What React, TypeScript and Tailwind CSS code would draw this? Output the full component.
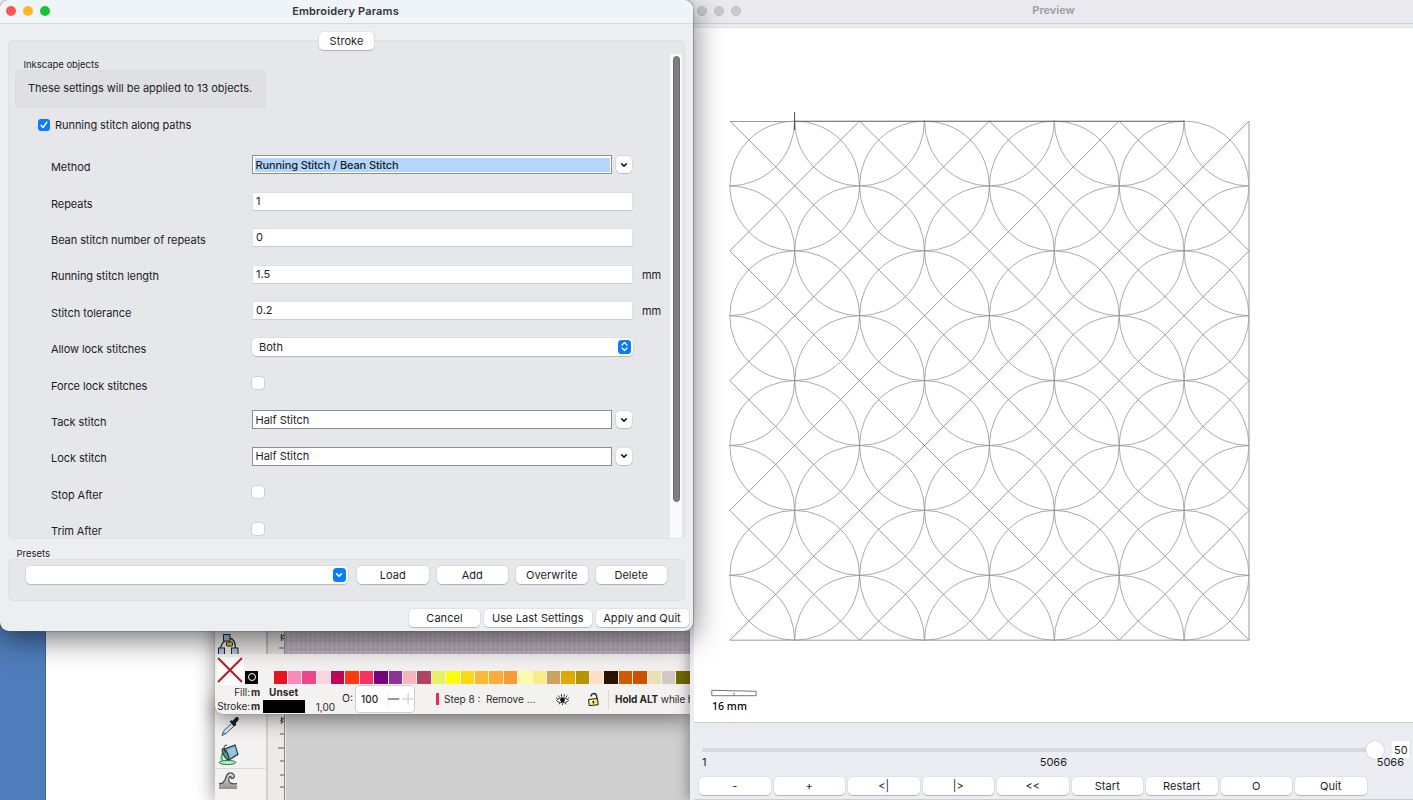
import React from "react";

const P = 129.8;
const X0 = 729.8;
const Y0 = 121;
const SIZE = P * 4;

const swatches = [
  "#e8141f", "#f48bb9", "#f1458b", "#fad5dd", "#c20556", "#fd3a10", "#f93465", "#760578", "#8c3494", "#f8b4bd",
  "#b04561", "#e6f163", "#ffff00", "#fcd815", "#fdb834", "#fdac39", "#fd9a31", "#fcfcab", "#fcec89", "#cba260",
  "#e4a700", "#b79400", "#fce0c5", "#291400", "#d25a00", "#d05000", "#e9e0b5", "#d3c8c8", "#706a00",
];

function Btn({ children, className = "" }: { children: React.ReactNode; className?: string }) {
  return (
    <div className={`flex h-[18px] shrink-0 items-center justify-center rounded-[4.5px] bg-white text-[11px] tracking-[0.06px] shadow-[0_0_0_0.5px_rgba(0,0,0,0.09),0_1px_1px_rgba(0,0,0,0.2)] ${className}`}>
      <span className="whitespace-pre leading-[16px]">{children}</span>
    </div>
  );
}

function Row({ label, unit, children }: { label: string; unit?: string; children: React.ReactNode }) {
  return (
    <div className="flex h-[36.4px] shrink-0 items-center">
      <div className="w-[201px] shrink-0 pt-[2px] text-[11px] leading-[14px] tracking-[-0.07px]">{label}</div>
      <div className="-mt-[2.6px] flex w-[381px] items-center">{children}</div>
      {unit && <div className="-mt-px pl-[9px] text-[11px] tracking-[-0.07px]">{unit}</div>}
    </div>
  );
}

function TextInput({ value }: { value: string }) {
  return (
    <div className="h-[19px] w-[381px] border border-b-[#cbccd0] border-t-[#dedfe3] border-x-[#e0e1e4] bg-white pl-[3px] text-[11px] leading-[17px]">
      {value}
    </div>
  );
}

function Combo({ value, selected }: { value: string; selected?: boolean }) {
  return (
    <>
      <div className="h-[19px] w-[360px] border border-[#8e8f90] bg-white p-[1.5px] text-[11px] leading-[15px]">
        <div className={selected ? "h-full bg-[#b2d6fe] pl-[1px] font-medium tracking-[-0.11px]" : "h-full pl-[1px]"}>{value}</div>
      </div>
      <div className="ml-[3.500px] flex h-[17px] w-[16.5px] items-center justify-center rounded-[4.5px] bg-white shadow-[0_0_0_0.5px_rgba(0,0,0,0.1),0_1px_1px_rgba(0,0,0,0.15)]">
        <svg width="8" height="6" viewBox="0 0 8 6" fill="none" stroke="#111" strokeWidth="1.5" strokeLinecap="round" strokeLinejoin="round">
          <path d="M1.6 1.7 4 4.1 6.4 1.7" />
        </svg>
      </div>
    </>
  );
}

function EmptyCheck() {
  return <div className="h-[12px] w-[12px] rounded-[3px] bg-white shadow-[0_0_0_0.6px_rgba(0,0,0,0.18)]" />;
}

function Pattern() {
  const n = [0, 1, 2, 3, 4];
  const m = [0, 1, 2, 3];
  const arcs: React.ReactNode[] = [];
  n.forEach((i) => n.forEach((j) => arcs.push(<circle key={`c${i}${j}`} cx={X0 + i * P} cy={Y0 + j * P} r={P / 2} />)));
  m.forEach((i) => m.forEach((j) => arcs.push(<circle key={`d${i}${j}`} cx={X0 + (i + 0.5) * P} cy={Y0 + (j + 0.5) * P} r={P / 2} />)));
  const diag: React.ReactNode[] = [];
  [-3, -2, -1, 0, 1, 2, 3].forEach((k) => {
    const a = Math.max(0, k) * P;
    const b = Math.max(0, -k) * P;
    const len = SIZE - Math.abs(k) * P;
    diag.push(<path key={`p${k}`} d={`M${X0 + a} ${Y0 + b}l${len} ${len}`} />);
    diag.push(<path key={`q${k}`} d={`M${X0 + SIZE - a} ${Y0 + b}l${-len} ${len}`} />);
  });
  return (
    <svg className="block" width="719" height="694" viewBox="694 28 719 694" fill="none">
      <defs>
        <clipPath id="area">
          <rect x={X0 - 0.5} y={Y0 - 0.5} width={SIZE + 1} height={SIZE + 1} />
        </clipPath>
      </defs>
      <g clipPath="url(#area)" stroke="#8e8e8e" strokeWidth="0.75">{arcs}</g>
      <g stroke="#7a7a7a" strokeWidth="0.75">{diag}</g>
      <path d="M730 121.5H795M730 640.2H1249" stroke="#9a9a9a" strokeWidth="1" />
      <path d="M795 121.2H1184" stroke="#5d5d5d" strokeWidth="1.1" />
      <path d="M1249 121V640" stroke="#aaa" strokeWidth="1.2" />
      <path d="M794.6 112V130" stroke="#4d4d4d" strokeWidth="1" />
      <path d="M711.8 690.3 756.2 691.3V695.7H711.8ZM734 692.8V695.5" stroke="#666" strokeWidth="0.9" />
      <text x="712" y="710.3" fontSize="10.6" fontWeight="500" fill="#000" fontFamily="Noto Sans, sans-serif">16 mm</text>
    </svg>
  );
}

function ConnectorIcon() {
  return (
    <svg width="24" height="21" viewBox="0 0 24 21" stroke="#20242a" fill="none">
      <path d="M8 8C5 10 4 12 3.500 16M13 5.500C17 6 18.500 10 18.500 16" strokeWidth="1.3" />
      <rect x="6.500" y="1.500" width="6.500" height="6.500" fill="#9ab9d5" />
      <rect x="9.500" y="9" width="6" height="4" rx="1" fill="#f0b429" />
      <rect x="1.500" y="15" width="6" height="6.500" fill="#a9c3dc" />
      <rect x="14.500" y="15" width="6.500" height="6.500" fill="#a9c3dc" />
    </svg>
  );
}

function DropperIcon() {
  return (
    <svg className="ml-[2px]" width="22" height="22" viewBox="0 0 22 22">
      <path d="M12.500 7.500 4.500 15 3 19.500 7 17.500 15 10Z" fill="#dbe8f2" stroke="#45535f" strokeWidth="1" />
      <path d="m4.500 15-1 4.500L7 17.500Z" fill="#5d9fd6" />
      <path d="m10.500 5.500 2-1.200 1.500.4L16 2c2.500-2.300 5 .2 3 2.700l-2.200 2.200.4 1.500-1.500 2.100Z" fill="#16202a" />
    </svg>
  );
}

function BucketIcon() {
  return (
    <svg width="24" height="24" viewBox="0 0 24 24">
      <ellipse cx="10.500" cy="19.500" rx="8.300" ry="2" fill="#b9efc5" stroke="#246e43" />
      <path d="M5 18.500c-1-5-.5-8 2.800-10" fill="none" stroke="#55b678" strokeWidth="2.200" />
      <path d="m6 6.500 12-4.500 3 9.500-9 5.500Z" fill="#6fa5c8" stroke="#26363f" strokeWidth="1.100" />
      <path d="m10 7 8-3 1.800 6.500-6.300 4Z" fill="#a5cee4" opacity=".8" />
      <ellipse cx="8.500" cy="11" rx="2" ry="6" transform="rotate(-27 8.500 11)" fill="#4f9a78" stroke="#1b2d33" />
      <path d="M8 9.500C6 4 7.500 1 10 2.500" fill="none" stroke="#333" />
    </svg>
  );
}

function WaveIcon() {
  return (
    <svg width="20" height="20" viewBox="0 0 20 20">
      <defs>
        <linearGradient id="wv" x1="0" y1="0" x2="0" y2="1">
          <stop offset="0" stopColor="#e1e3e2" />
          <stop offset="1" stopColor="#8e918f" />
        </linearGradient>
      </defs>
      <path d="M1 12.500c4 1 6-2 7-5C9 3 13 1 16 4c1 2-.5 4.500-2.500 3.500.5-2-1.500-2.500-2.500-.5-1 3 0 6.500 8 5.500V18H1Z" fill="url(#wv)" />
      <path d="M1 12.500c4 1 5.500-2 6.500-5C9 2 13 0 16 3.800c1.200 2.700-1.700 4.700-3 3 .5-2-1.500-2-2.200.5C10 11 12 13.500 19 12.500" fill="none" stroke="#454847" strokeWidth="1.200" />
    </svg>
  );
}

function EyeIcon() {
  return (
    <svg width="15" height="13" viewBox="0 0 15 13" fill="none" stroke="#161616">
      <path d="M1.500 7.500C4 4 11 4 13.500 7.500 11 10.500 4 10.500 1.500 7.500Z" strokeWidth=".9" fill="#fff" />
      <circle cx="7.500" cy="7" r="1.900" fill="#111" />
      <path d="M1 4.500 2.600 5.700M3.300 2.500l1.100 1.800M6.300 1.200l.3 2.400M9.500 1.300 8.900 3.600M12.300 2.500l-1.400 1.800M14.200 4.700 12.600 5.800M4 11.300l.6-1.200M7.500 12v-1.300M11 11.300l-.6-1.200" strokeWidth=".9" />
    </svg>
  );
}

function LockIcon() {
  return (
    <svg width="13" height="15" viewBox="0 0 13 15">
      <path d="M4 4.500C4 1 8.500.5 9.500 3.500L10 8" fill="none" stroke="#222" strokeWidth="1.300" />
      <path d="m1.500 7.500 9-1 .7 6.200-9 1Z" fill="#f5e86c" stroke="#1d1d16" />
      <path d="m3 8.500 5.500-.6-4.500 4Z" fill="#fff8c2" />
      <path d="m6.200 8.800.3 2.500" stroke="#111" strokeWidth="1.500" />
    </svg>
  );
}

function RulerTicks({ ticks }: { ticks: { y: number; w: number }[] }) {
  return (
    <svg className="block" width="17" height="86" viewBox="0 0 17 86" stroke="#555" fill="none">
      <path d="M16.500 0V86" stroke="#8b8b8b" />
      {ticks.map((t) => (
        <path key={t.y} d={`M${16 - t.w} ${t.y}H16`} />
      ))}
      <path d="M13.500 3v7M16 4l-3 2.500 3 1.500" strokeWidth="1.300" />
    </svg>
  );
}

function InkscapeBack() {
  return (
    <div className="absolute left-[215px] top-[700px] flex h-[100px] w-[476px] bg-[#cfcfcf] shadow-[0_0_18px_rgba(0,0,0,0.5)]">
      <div className="flex w-[52px] flex-col border-r border-[#cfcfcf] bg-[#f3f2f1] pl-[2px] pt-[16px]">
        <DropperIcon />
        <div className="mt-[5px] h-[25px]"><BucketIcon /></div>
        <div className="-ml-[2px] border-t border-[#d8d8d8] pl-[3px] pt-[2px]"><WaveIcon /></div>
      </div>
      <div className="w-[19px] border-l border-[#d2d2d2] bg-[#ebeae9] pt-[14px]">
        <RulerTicks ticks={[{ y: 20, w: 4 }, { y: 34, w: 6 }, { y: 47, w: 4 }, { y: 61, w: 4 }, { y: 73, w: 4 }]} />
      </div>
    </div>
  );
}

function InkscapeFront() {
  return (
    <div className="absolute left-[215px] top-[600px] flex h-[114px] w-[475px] flex-col overflow-hidden rounded-bl-[8px] bg-[#f3f2f1] shadow-[0_5px_20px_rgba(0,0,0,0.45),0_0_1px_rgba(0,0,0,0.6)]">
      <div className="flex h-[54px] shrink-0 pt-[31px]">
        <div className="flex w-[52px] border-r border-[#bdbdbc] bg-[#e8e7e5] pl-[2px] pt-[2px]"><ConnectorIcon /></div>
        <div className="w-[18px] overflow-hidden border-l border-[#b0b0b0] bg-[#dddcdb]">
          <RulerTicks ticks={[{ y: 17, w: 5 }]} />
        </div>
        <div className="h-[23px] flex-1 bg-[#b6b8b7]">
          <svg className="block" width="405" height="23">
            <defs>
              <pattern id="grid" width="14.400" height="9.600" patternUnits="userSpaceOnUse">
                <path d="M1.500 0V10M6.300 0V10M11.100 0V10M0 9.100H15" fill="none" stroke="#c77fcb" strokeWidth=".7" />
              </pattern>
            </defs>
            <rect width="405" height="23" fill="url(#grid)" />
          </svg>
        </div>
      </div>
      <div className="flex h-[32px] shrink-0 pl-[2px]">
        <svg width="27" height="32" viewBox="0 0 27 32">
          <rect y="3" width="27" height="28" fill="#fff" />
          <path d="M1 4 25 28M25 4 1 28" stroke="#bd1727" strokeWidth="2" />
        </svg>
        <div className="ml-[1px] mt-[16.500px] flex h-[13.500px] w-[13px] items-center justify-center bg-[#0a0a0a]">
          <div className="h-[8px] w-[8px] rounded-full border border-white" />
        </div>
        <div className="ml-[15.500px] mt-[16.500px] flex gap-[1px]">
          {swatches.map((c, i) => (
            <div key={i} className="h-[13.500px] w-[13.400px] shrink-0" style={{ background: c }} />
          ))}
        </div>
      </div>
      <div className="flex h-[28px] shrink-0 whitespace-pre text-[10px] text-[#282828]">
        <div className="-mt-[0.600px] w-[45px] shrink-0 pl-[2px] leading-[14px] tracking-[-0.08px]">
          <div className="text-right">Fill:<b className="ml-px">m</b></div>
          <div className="text-right">Stroke:<b className="ml-px">m</b></div>
        </div>
        <div className="ml-[3px] w-[42px] shrink-0">
          <div className="-mt-px h-[15px] pl-[6px] font-bold leading-[14px] tracking-[0.1px]">Unset</div>
          <div className="h-[13px] bg-black" />
        </div>
        <div className="w-[30px] shrink-0 pt-[14px] text-right leading-[14px]">1,00</div>
        <div className="ml-[7px] shrink-0 pt-[6px] text-[10.500px] leading-[14px]">O:</div>
        <div className="ml-[2px] -mt-[1px] flex h-[28px] w-[60px] shrink-0 items-center rounded-[4px] border border-[#d2cdca] bg-white text-[10px]">
          <span className="w-[32px] border-r border-[#f0f0f0] pl-[5px] font-medium">100</span>
          <svg width="27" height="20" viewBox="0 0 27 20" fill="none">
            <path d="M0 10H11.500" stroke="#333" strokeWidth="1.200" />
            <path d="M14.500 10H26M20.500 4.500V15.500" stroke="#c8c8c8" strokeWidth="1.200" />
          </svg>
        </div>
        <div className="ml-[21px] mt-[7px] h-[12px] w-[3px] shrink-0 bg-[#e92a5d]" />
        <div className="ml-[5px] w-[111px] shrink-0 pt-[6px] leading-[14px]">Step 8 :  Remove ...</div>
        <div className="mt-[7px] w-[32px] shrink-0"><EyeIcon /></div>
        <div className="mt-[6px] w-[21px] shrink-0"><LockIcon /></div>
        <div className="mt-[4px] h-[20px] w-px shrink-0 bg-[#dadada]" />
        <div className="ml-[6px] shrink-0 pt-[6px] leading-[14px] tracking-[-0.1px]"><b className="font-bold">Hold ALT</b> while hovering</div>
      </div>
    </div>
  );
}

function PreviewWindow() {
  return (
    <div className="absolute left-[690px] top-0 flex h-[800px] w-[723px] flex-col bg-[#ecedf2] shadow-[-2px_0_12px_rgba(0,0,0,0.35)]">
      <div className="flex h-[24px] shrink-0 items-center border-b border-[#ced0d5] bg-[#e9e9ee] pb-[1px] pl-[7px]">
        <div className="flex w-[44px] shrink-0 gap-[7px]">
          <div className="h-[10px] w-[10px] shrink-0 rounded-full border border-[#bdbdc1] bg-[#cacace]" />
          <div className="h-[10px] w-[10px] shrink-0 rounded-full border border-[#bdbdc1] bg-[#cacace]" />
          <div className="h-[10px] w-[10px] shrink-0 rounded-full border border-[#bdbdc1] bg-[#cacace]" />
        </div>
        <div className="-mt-px flex-1 pr-[47px] text-center text-[11px] font-semibold text-[#9b9ba0]">Preview</div>
      </div>
      <div className="ml-[4px] h-[4px] shrink-0 border-b border-[#dfe3e7] bg-[#ebedf1]" />
      <div className="ml-[4px] h-[694px] shrink-0 bg-white"><Pattern /></div>
      <div className="ml-[4px] h-[5px] shrink-0 border-y border-b-[#e2e3e7] border-t-[#c9cacf]" />
      <div className="ml-[4px] flex h-[73px] flex-col border-b border-[#cdced2] text-[11px]">
        <div className="flex h-[29px] items-start pl-[8px] pt-[14px]">
          <div className="relative z-10 mt-[7px] flex h-[4px] w-[682px] items-center rounded-full bg-[#d8d9dd]">
            <div className="ml-auto h-[18px] w-[18px] shrink-0 rounded-full bg-white shadow-[0_0_2px_rgba(0,0,0,0.25)]" />
          </div>
          <div className="relative z-10 ml-[8px] h-[17px] w-[16.500px] overflow-hidden bg-white pl-[2px] leading-[18px]">50</div>
        </div>
        <div className="-mt-px flex h-[22px] shrink-0 justify-between pl-[8px] pr-[9px] leading-[14px]">
          <span className="w-[28px]">1</span>
          <span>5066</span>
          <span>5066</span>
        </div>
        <div className="flex gap-[3px] pl-[5px]">
          {["-", "+", "<|", "|>", "<<", "Start", "Restart", "O", "Quit"].map((t) => (
            <Btn key={t} className="w-[71.500px]">{t}</Btn>
          ))}
        </div>
      </div>
    </div>
  );
}

function ParamsWindow() {
  return (
    <div className="absolute left-0 top-0 flex h-[630.500px] w-[693px] flex-col rounded-[9px] bg-[#edeef2] shadow-[0_0_1px_1px_rgba(80,80,90,0.35),0_8px_30px_rgba(0,0,0,0.55)]">
      <div className="flex h-[24px] shrink-0 items-center rounded-t-[9px] border-b border-[#d2dadf] bg-[#eff4f8] pb-[1px] pl-[6px]">
        <div className="flex w-[50px] gap-[7px]">
          <div className="h-[10px] w-[10px] rounded-full bg-[#fc5650]" />
          <div className="h-[10px] w-[10px] rounded-full bg-[#fdb625]" />
          <div className="h-[10px] w-[10px] rounded-full bg-[#1bc236]" />
        </div>
        <div className="flex-1 pr-[58px] text-center text-[11px] font-semibold tracking-[0.15px] text-[#323539]">Embroidery Params</div>
      </div>
      <div className="relative z-10 mt-[8px] flex justify-center">
        <Btn className="w-[55px]">Stroke</Btn>
      </div>
      <div className="-mt-[10px] ml-[8px] flex h-[499px] w-[677px] shrink-0 overflow-hidden rounded-[5px] border border-[#dfe0e4] bg-[#e6e7ea]">
        <div className="flex flex-1 flex-col">
          <div className="h-[29px] shrink-0 pl-[14.500px] pt-[18px] text-[9.500px] leading-[12px] tracking-[-0.04px]">Inkscape objects</div>
          <div className="ml-[6px] flex h-[38px] w-[251px] shrink-0 items-center rounded-[4px] border border-[#dadbdf] bg-[#dfe0e4] pb-px pl-[12px] text-[11px] tracking-[-0.03px]">
            These settings will be applied to 13 objects.
          </div>
          <div className="flex h-[33px] shrink-0 items-center pl-[29px] text-[11px] leading-[16px] tracking-[-0.06px]">
            <div className="mr-[5px] flex h-[12px] w-[12px] items-center justify-center rounded-[3px] bg-[#0a7bff]">
              <svg width="8" height="8" viewBox="0 0 8 8" fill="none" stroke="#fff" strokeWidth="1.500" strokeLinecap="round" strokeLinejoin="round">
                <path d="M1.200 4.300 3 6.500 6.800 1.200" />
              </svg>
            </div>
            <span className="pt-px">Running stitch along paths</span>
          </div>
          <div className="flex flex-col pl-[42px] pt-[7px]">
            <Row label="Method"><Combo value="Running Stitch / Bean Stitch" selected /></Row>
            <Row label="Repeats"><TextInput value="1" /></Row>
            <Row label="Bean stitch number of repeats"><TextInput value="0" /></Row>
            <Row label="Running stitch length" unit="mm"><TextInput value="1.5" /></Row>
            <Row label="Stitch tolerance" unit="mm"><TextInput value="0.2" /></Row>
            <Row label="Allow lock stitches">
              <div className="flex h-[18px] w-[382px] items-center justify-between rounded-[4.500px] bg-white pl-[7px] pr-[2px] text-[11px] shadow-[0_0_0_0.5px_rgba(0,0,0,0.07),0_1px_1px_rgba(0,0,0,0.18)]">
                Both
                <div className="flex h-[14px] w-[13.500px] items-center justify-center rounded-[3.500px] bg-[#0a7bff]">
                  <svg width="9" height="11" viewBox="0 0 9 11" fill="none" stroke="#fff" strokeWidth="1.300" strokeLinecap="round" strokeLinejoin="round">
                    <path d="M2 4 4.500 1.500 7 4M2 7 4.500 9.500 7 7" />
                  </svg>
                </div>
              </div>
            </Row>
            <Row label="Force lock stitches"><EmptyCheck /></Row>
            <Row label="Tack stitch"><Combo value="Half Stitch" /></Row>
            <Row label="Lock stitch"><Combo value="Half Stitch" /></Row>
            <Row label="Stop After"><EmptyCheck /></Row>
            <Row label="Trim After"><EmptyCheck /></Row>
          </div>
        </div>
        <div className="mr-[2px] mt-[13px] w-[12px] shrink-0 bg-[#fafafa] pl-[2.500px] pt-[2px]">
          <div className="h-[446px] w-[7px] rounded-full border border-[#6b6b6b] bg-[#7e7e7e]" />
        </div>
      </div>
      <div className="h-[20px] shrink-0 pl-[16.500px] pt-[9px] text-[9.500px] leading-[12px]">Presets</div>
      <div className="ml-[8px] flex h-[42px] w-[677px] shrink-0 items-start rounded-[5px] border border-[#dfe0e4] bg-[#e6e7ea] pl-[17px] pt-[6px]">
        <div className="mr-[9px] flex h-[18px] w-[322px] items-center justify-end rounded-[4.500px] bg-white pr-[2px] shadow-[0_0_0_0.5px_rgba(0,0,0,0.07),0_1px_1px_rgba(0,0,0,0.18)]">
          <div className="flex h-[14px] w-[13.500px] items-center justify-center rounded-[3.500px] bg-[#0a7bff]">
            <svg width="8" height="6" viewBox="0 0 8 6" fill="none" stroke="#fff" strokeWidth="1.500" strokeLinecap="round" strokeLinejoin="round">
              <path d="M1.500 1.700 4 4.200 6.500 1.700" />
            </svg>
          </div>
        </div>
        <div className="flex gap-[8px]">
          <Btn className="w-[71.500px]">Load</Btn>
          <Btn className="w-[71.500px]">Add</Btn>
          <Btn className="w-[71.500px]">Overwrite</Btn>
          <Btn className="w-[71.500px]">Delete</Btn>
        </div>
      </div>
      <div className="flex justify-end gap-[4px] pr-[4.500px] pt-[8px]">
        <Btn className="w-[71px]">Cancel</Btn>
        <Btn className="w-[107.500px]">Use Last Settings</Btn>
        <Btn className="w-[93px]">Apply and Quit</Btn>
      </div>
    </div>
  );
}

export default function App() {
  return (
    <div className="relative h-[800px] w-[1413px] overflow-hidden bg-white font-[Inter,sans-serif] text-[#1d1d1f]">
      <div className="absolute bottom-0 left-0 top-[600px] w-[46px] border-r border-[#3d6596] bg-[#4f7dbb]" />
      <InkscapeBack />
      <InkscapeFront />
      <PreviewWindow />
      <ParamsWindow />
    </div>
  );
}
